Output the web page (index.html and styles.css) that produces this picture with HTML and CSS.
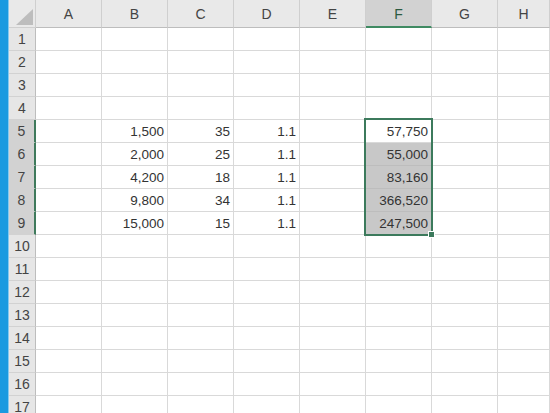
FILE: index.html
```html
<!DOCTYPE html>
<html lang="ja">
<head>
<meta charset="utf-8">
<title>Sheet</title>
<link rel="stylesheet" href="styles.css">
</head>
<body>
<div class="app">
  <div class="strip"></div>
  <div class="sheet">
    <div class="corner"><svg width="18" height="17" viewBox="0 0 18 17"><polygon points="17,0 17,16 0,16" fill="#bdbdbd"/></svg></div>
    <div class="ch">A</div><div class="ch">B</div><div class="ch">C</div><div class="ch">D</div><div class="ch">E</div><div class="ch ch-sel">F</div><div class="ch">G</div><div class="ch">H</div>

    <div class="rh">1</div><div class="c"></div><div class="c"></div><div class="c"></div><div class="c"></div><div class="c"></div><div class="c"></div><div class="c"></div><div class="c"></div>
    <div class="rh">2</div><div class="c"></div><div class="c"></div><div class="c"></div><div class="c"></div><div class="c"></div><div class="c"></div><div class="c"></div><div class="c"></div>
    <div class="rh">3</div><div class="c"></div><div class="c"></div><div class="c"></div><div class="c"></div><div class="c"></div><div class="c"></div><div class="c"></div><div class="c"></div>
    <div class="rh">4</div><div class="c"></div><div class="c"></div><div class="c"></div><div class="c"></div><div class="c"></div><div class="c"></div><div class="c"></div><div class="c"></div>
    <div class="rh rh-sel">5</div><div class="c"></div><div class="c">1,500</div><div class="c">35</div><div class="c">1.1</div><div class="c"></div><div class="c c-active">57,750<div class="selection"><span class="handle"></span></div></div><div class="c"></div><div class="c"></div>
    <div class="rh rh-sel">6</div><div class="c"></div><div class="c">2,000</div><div class="c">25</div><div class="c">1.1</div><div class="c"></div><div class="c c-sel">55,000</div><div class="c"></div><div class="c"></div>
    <div class="rh rh-sel">7</div><div class="c"></div><div class="c">4,200</div><div class="c">18</div><div class="c">1.1</div><div class="c"></div><div class="c c-sel">83,160</div><div class="c"></div><div class="c"></div>
    <div class="rh rh-sel">8</div><div class="c"></div><div class="c">9,800</div><div class="c">34</div><div class="c">1.1</div><div class="c"></div><div class="c c-sel">366,520</div><div class="c"></div><div class="c"></div>
    <div class="rh rh-sel">9</div><div class="c"></div><div class="c">15,000</div><div class="c">15</div><div class="c">1.1</div><div class="c"></div><div class="c c-sel">247,500</div><div class="c"></div><div class="c"></div>
    <div class="rh">10</div><div class="c"></div><div class="c"></div><div class="c"></div><div class="c"></div><div class="c"></div><div class="c"></div><div class="c"></div><div class="c"></div>
    <div class="rh">11</div><div class="c"></div><div class="c"></div><div class="c"></div><div class="c"></div><div class="c"></div><div class="c"></div><div class="c"></div><div class="c"></div>
    <div class="rh">12</div><div class="c"></div><div class="c"></div><div class="c"></div><div class="c"></div><div class="c"></div><div class="c"></div><div class="c"></div><div class="c"></div>
    <div class="rh">13</div><div class="c"></div><div class="c"></div><div class="c"></div><div class="c"></div><div class="c"></div><div class="c"></div><div class="c"></div><div class="c"></div>
    <div class="rh">14</div><div class="c"></div><div class="c"></div><div class="c"></div><div class="c"></div><div class="c"></div><div class="c"></div><div class="c"></div><div class="c"></div>
    <div class="rh">15</div><div class="c"></div><div class="c"></div><div class="c"></div><div class="c"></div><div class="c"></div><div class="c"></div><div class="c"></div><div class="c"></div>
    <div class="rh">16</div><div class="c"></div><div class="c"></div><div class="c"></div><div class="c"></div><div class="c"></div><div class="c"></div><div class="c"></div><div class="c"></div>
    <div class="rh">17</div><div class="c"></div><div class="c"></div><div class="c"></div><div class="c"></div><div class="c"></div><div class="c"></div><div class="c"></div><div class="c"></div>
  </div>
</div>
</body>
</html>
```
FILE: styles.css
```css
html, body {
  margin: 0;
  padding: 0;
  background: #ffffff;
  overflow: hidden;
}
.app {
  display: flex;
  width: 550px;
  height: 413px;
  overflow: hidden;
  font-family: "Liberation Sans", Arial, sans-serif;
  font-size: 13.5px;
  color: #333333;
}
.strip {
  flex: 0 0 8px;
  background: #1a9ae0;
  border-right: 1px solid #86c9ee;
}
.sheet {
  flex: 1;
  display: grid;
  grid-template-columns: 27px repeat(7, 66px) 1fr;
  grid-template-rows: 28px repeat(17, 23px);
  background: #ffffff;
}
.corner {
  box-sizing: border-box;
  background: #e9e9e9;
  border-right: 1px solid #cfcfcf;
  border-bottom: 1px solid #cfcfcf;
  display: flex;
  align-items: flex-end;
  justify-content: flex-end;
  padding: 0 1px 1px 0;
}
.ch {
  box-sizing: border-box;
  background: #e9e9e9;
  border-right: 1px solid #cfcfcf;
  border-bottom: 1px solid #bdbdbd;
  display: flex;
  align-items: center;
  justify-content: center;
  color: #444444;
  font-size: 14px;
  padding-top: 1px;
}
.ch-sel {
  background: #d2d2d2;
  border-bottom: 2px solid #3f8a62;
  color: #2c5a40;
  padding-top: 2px;
}
.rh {
  box-sizing: border-box;
  background: #e6e6e6;
  border-right: 1px solid #bdbdbd;
  border-bottom: 1px solid #d2d2d2;
  display: flex;
  align-items: center;
  justify-content: center;
  color: #444444;
  font-size: 14px;
}
.rh-sel {
  background: #d2d2d2;
  border-right: 2px solid #3f7a5c;
}
.c {
  box-sizing: border-box;
  border-right: 1px solid #d9d9d9;
  border-bottom: 1px solid #d9d9d9;
  display: flex;
  align-items: center;
  justify-content: flex-end;
  padding-right: 3px;
  padding-top: 1px;
  white-space: nowrap;
}
.c-active {
  position: relative;
}
.c-sel {
  background: #c8c8c8;
  border-bottom-color: #bdbdbd;
}
.selection {
  position: absolute;
  top: -2px;
  left: -2px;
  width: 69px;
  height: 118px;
  box-sizing: border-box;
  border: 2px solid #3c7a5c;
  pointer-events: none;
}
.handle {
  position: absolute;
  right: -4px;
  bottom: -4px;
  width: 5px;
  height: 5px;
  background: #3c7a5c;
  border: 1px solid #ffffff;
}
```
